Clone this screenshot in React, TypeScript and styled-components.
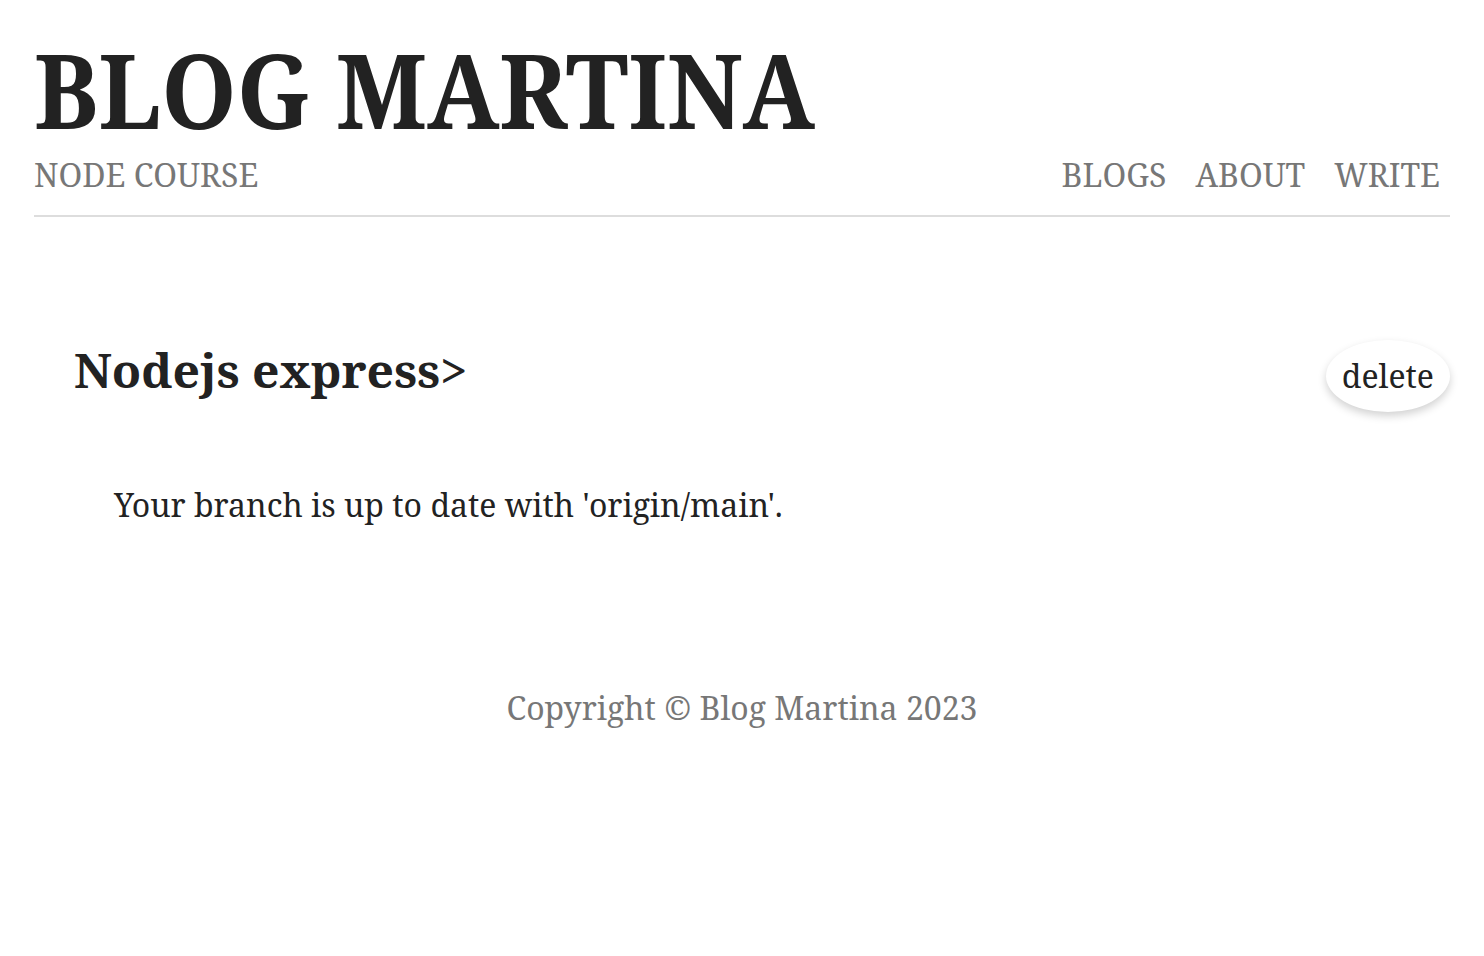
import React from 'react';
import styled, { createGlobalStyle } from 'styled-components';

const GlobalStyle = createGlobalStyle`
  html, body {
    margin: 0;
    padding: 0;
    background: #fff;
  }
  body {
    font-family: 'Noto Serif', 'DejaVu Serif', serif;
    color: #222;
  }
`;

const Page = styled.div`
  padding: 0 34px;
`;

const Header = styled.header`
  border-bottom: 2px solid #ddd;
  padding-top: 37px;
`;

const Title = styled.h1`
  margin: 0;
  font-size: 104px;
  font-weight: 700;
  line-height: 104px;
  color: #222;
  transform: scaleX(0.923);
  transform-origin: left center;
`;

const NavRow = styled.nav`
  display: flex;
  justify-content: space-between;
  align-items: baseline;
  padding: 11px 0 18px;
`;

const Brand = styled.a`
  font-size: 33px;
  color: #777;
  text-decoration: none;
  transform: scaleX(0.97);
  transform-origin: left center;
`;

const Links = styled.div`
  display: flex;
  gap: 29px;
  padding-right: 10px;
`;

const NavLink = styled.a`
  font-size: 32px;
  color: #777;
  text-decoration: none;
`;

const Post = styled.section`
  padding: 112px 0 0 40px;
`;

const PostHead = styled.div`
  display: flex;
  justify-content: space-between;
  align-items: flex-start;
`;

const PostTitle = styled.h2`
  margin: 8px 0 0;
  font-size: 48px;
  font-weight: 700;
  color: #222;
`;

const DeleteButton = styled.button`
  font-family: inherit;
  font-size: 32px;
  line-height: 40px;
  color: #222;
  background: #fff;
  border: none;
  border-radius: 50%;
  padding: 16px 16px;
  margin-top: 11px;
  box-shadow: 0 4px 8px rgba(0, 0, 0, 0.18);
  cursor: pointer;
`;

const Body = styled.p`
  margin: 71px 0 0 40px;
  font-size: 32px;
  color: #222;
`;

const Footer = styled.footer`
  text-align: center;
  margin-top: 160px;
  font-size: 32px;
  color: #777;
`;

export default function App() {
  return (
    <>
      <GlobalStyle />
      <Page>
        <Header>
          <Title>BLOG MARTINA</Title>
          <NavRow>
            <Brand href="#">NODE COURSE</Brand>
            <Links>
              <NavLink href="#">BLOGS</NavLink>
              <NavLink href="#">ABOUT</NavLink>
              <NavLink href="#">WRITE</NavLink>
            </Links>
          </NavRow>
        </Header>
        <Post>
          <PostHead>
            <PostTitle>Nodejs express&gt;</PostTitle>
            <DeleteButton>delete</DeleteButton>
          </PostHead>
          <Body>Your branch is up to date with 'origin/main'.</Body>
        </Post>
        <Footer>Copyright © Blog Martina 2023</Footer>
      </Page>
    </>
  );
}
